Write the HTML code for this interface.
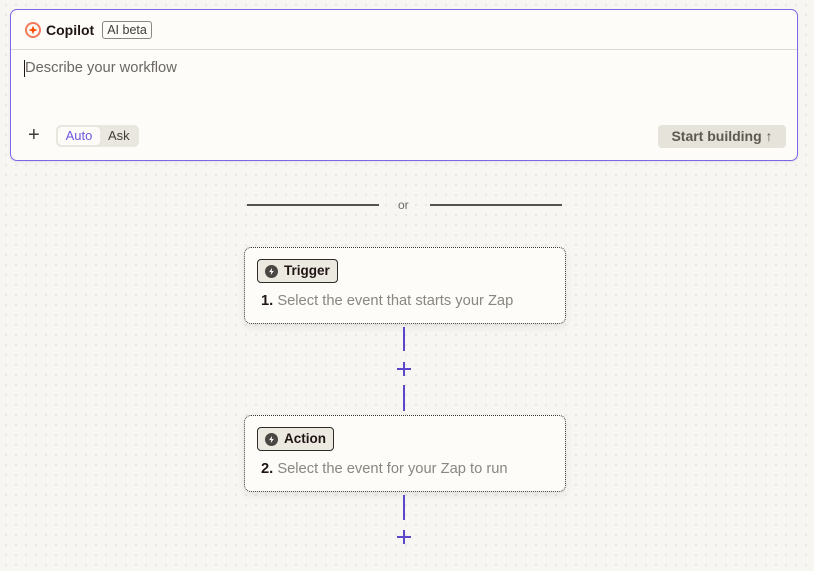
<!DOCTYPE html><html><head><style>
body{margin:0;width:814px;height:571px;overflow:hidden;background-color:#f7f6f3;background-image:radial-gradient(circle,#e0ddd6 0.7px,transparent 1px);background-size:10px 10px;background-position:1px 0;font-family:"Liberation Sans",sans-serif;position:relative}
.cp{position:absolute;left:10px;top:9px;width:786px;height:150px;border:1px solid #7b68e8;border-radius:7px;background:#fdfcf9;box-shadow:0 1px 2px rgba(0,0,0,.08)}
.hd{height:39px;border-bottom:1px solid #dcd9d2;display:flex;align-items:center;padding-left:14px}
.hd b{font-size:14px;color:#201515;margin-left:5px}
.beta{margin-left:8px;border:1px solid #8a8680;border-radius:3px;font-size:12.5px;color:#403c38;padding:1px 4px}
.ph{position:absolute;left:13px;top:50px;font-size:14.7px;color:#6b6762;border-left:1px solid #201515;padding-left:0;line-height:17px}
.plus{position:absolute;left:17px;top:115px;font-size:20px;color:#403c38;line-height:20px}
.tg{position:absolute;left:45px;top:115px;background:#e9e7df;border-radius:5px;height:22px;width:83px;font-size:13px}
.tg span{position:absolute;top:2px;height:18px;line-height:18px}
.sb{position:absolute;left:647px;top:115px;width:128px;height:23px;background:#e6e3da;border-radius:4px;color:#5d5850;font-size:14px;font-weight:bold;line-height:23px;text-align:center}
.or{position:absolute;top:204px;height:2px;background:#55524d}
.card{position:absolute;left:244px;width:320px;height:75px;border:1px dotted #3a3632;border-radius:7px;background:#fdfcf9;box-shadow:0 3px 8px rgba(0,0,0,.08)}
.pill{position:absolute;left:12px;top:11px;height:22px;border:1px solid #2d2a27;border-radius:4px;background:#ece9e0;font-size:13.5px;font-weight:bold;color:#201515;line-height:22px;padding:0 7px 0 26px}
.pill i{position:absolute;left:7px;top:5px;width:13px;height:13px;border-radius:50%;background:#4a4642}
.pill i:after{content:"";position:absolute;left:4px;top:3px;width:5px;height:7px;background:#fff;clip-path:polygon(60% 0,0 60%,45% 55%,35% 100%,100% 40%,55% 45%)}
.txt{position:absolute;left:16px;top:45px;font-size:14.7px;color:#8a8680}
.txt b{color:#201515}
.vl{position:absolute;left:403px;width:2px;background:#5a47c9}
.ad{position:absolute;left:397px;width:14px;height:14px}
.ad:before{content:"";position:absolute;left:0;top:6px;width:14px;height:2px;background:#5a47c9}
.ad:after{content:"";position:absolute;left:6px;top:0;width:2px;height:14px;background:#5a47c9}
</style></head><body>
<div class="cp">
<div class="hd"><svg width="16" height="16" viewBox="0 0 16 16"><circle cx="8" cy="8" r="7" fill="none" stroke="#f27a5a" stroke-width="2"/><path d="M8 3.5L9.2 6.8 12.5 8 9.2 9.2 8 12.5 6.8 9.2 3.5 8 6.8 6.8Z" fill="#ff4f00"/></svg><b>Copilot</b><span class="beta">AI beta</span></div>
<div class="ph">Describe your workflow</div>
<div class="plus">+</div>
<div class="tg"><span style="left:2px;width:42px;background:#fdfcf9;border-radius:4px;color:#6b57e0;text-align:center">Auto</span><span style="left:52px;color:#403c38">Ask</span></div>
<div class="sb">Start building ↑</div>
</div>
<div class="or" style="left:247px;width:132px"></div>
<div style="position:absolute;left:398px;top:198px;font-size:12px;color:#6b6762">or</div>
<div class="or" style="left:430px;width:132px"></div>
<div class="card" style="top:247px"><div class="pill"><i></i>Trigger</div><div class="txt"><b>1.</b> Select the event that starts your Zap</div></div>
<div class="vl" style="top:327px;height:24px"></div>
<div class="ad" style="top:362px"></div>
<div class="vl" style="top:385px;height:26px"></div>
<div class="card" style="top:415px"><div class="pill"><i></i>Action</div><div class="txt"><b>2.</b> Select the event for your Zap to run</div></div>
<div class="vl" style="top:495px;height:25px"></div>
<div class="ad" style="top:530px"></div>
</body></html>
